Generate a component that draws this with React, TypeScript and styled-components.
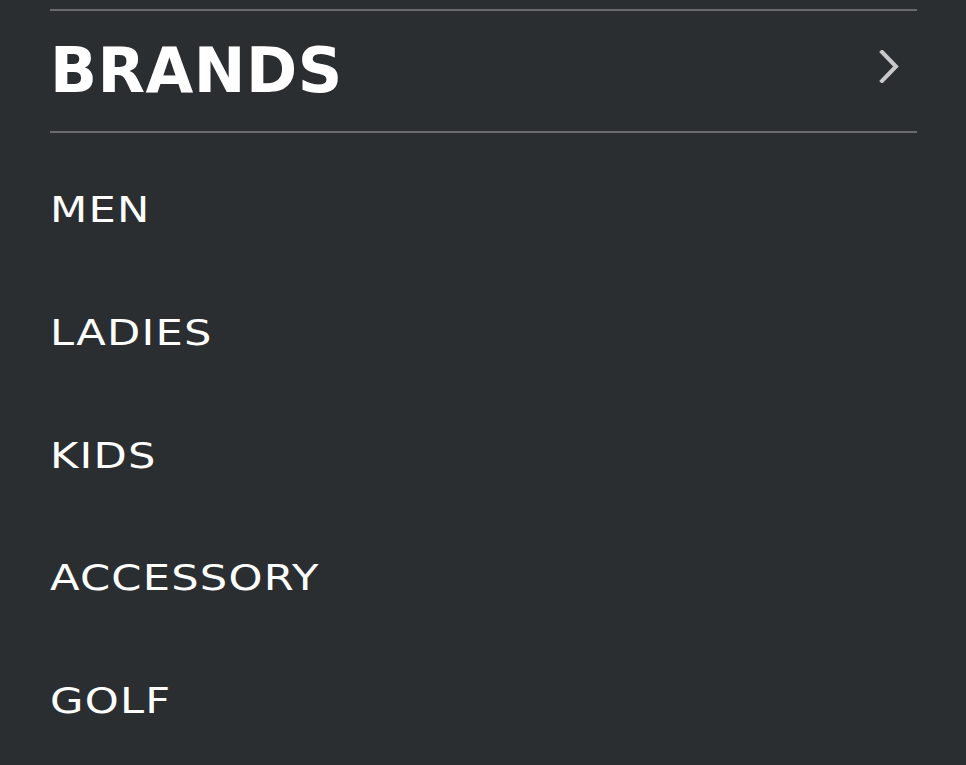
import styled, { createGlobalStyle } from "styled-components";

const items = ["MEN", "LADIES", "KIDS", "ACCESSORY", "GOLF"];

const GlobalStyle = createGlobalStyle`
  html, body {
    margin: 0;
    padding: 0;
    background: #2b2e31;
  }
  body {
    font-family: "DejaVu Sans", "Liberation Sans", sans-serif;
    color: #ffffff;
  }
`;

const App = () => {
  return (
    <Menu>
      <GlobalStyle />
      <Header>
        <Title>BRANDS</Title>
        <Chevron viewBox="0 0 20 33" aria-hidden>
          <polyline points="3,2 17,16.5 3,31" />
        </Chevron>
      </Header>
      <List>
        {items.map((label) => (
          <Item key={label}>
            <ItemLabel>{label}</ItemLabel>
          </Item>
        ))}
      </List>
    </Menu>
  );
};

export default App;

const Menu = styled.nav`
  min-height: 765px;
  padding: 9px 49px 0 50px;
  box-sizing: border-box;
  background: #2b2e31;
`;

const Header = styled.div`
  display: flex;
  align-items: center;
  justify-content: space-between;
  height: 120px;
  border-top: 2px solid #686a6c;
  border-bottom: 2px solid #686a6c;
`;

const Title = styled.h2`
  margin: 0;
  font-size: 63px;
  line-height: 120px;
  font-weight: 700;
  letter-spacing: 0.5px;
  transform: scaleX(0.98);
  transform-origin: left center;
`;

const Chevron = styled.svg`
  width: 20px;
  height: 33px;
  margin: 0 18px 9px 0;
  fill: none;
  stroke: #c9c9c9;
  stroke-width: 4;
  stroke-linecap: square;
`;

const List = styled.ul`
  list-style: none;
  margin: 0;
  padding: 16px 0 0;
`;

const Item = styled.li`
  height: 122.8px;
  display: flex;
  align-items: center;
`;

const ItemLabel = styled.span`
  font-size: 36px;
  line-height: 122.8px;
  font-weight: 400;
  letter-spacing: 1px;
  transform: scaleX(1.2);
  transform-origin: left center;
`;
